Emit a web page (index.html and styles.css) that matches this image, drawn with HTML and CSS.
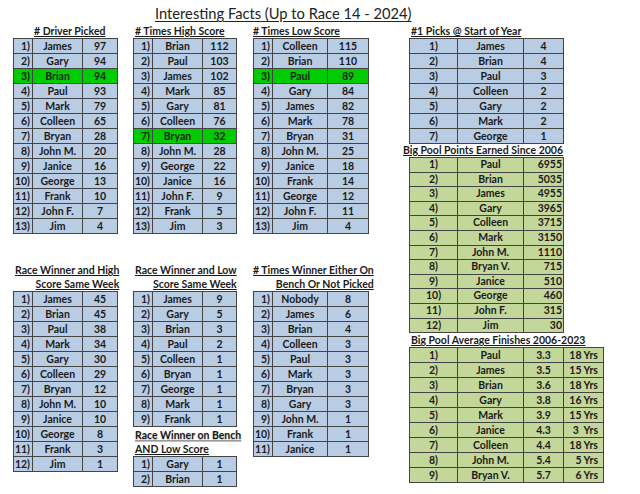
FILE: index.html
```html
<!DOCTYPE html>
<html>
<head>
<meta charset="utf-8">
<link rel="stylesheet" href="styles.css">
</head>
<body>
<div class="page">
  <div class="title"><span>Interesting Facts (Up to Race 14 - 2024)</span></div>
  <div class="grid">
    <div class="col col1">
      <div class="hd hd-c1"><span>#&nbsp;Driver Picked</span></div>
      <table class="t w1 blue">
        <colgroup><col class="ra"><col class="rb"><col class="rc"></colgroup>
        <tr><td class="rk">1)</td><td>James</td><td>97</td></tr>
        <tr><td class="rk">2)</td><td>Gary</td><td>94</td></tr>
        <tr class="hi"><td class="rk">3)</td><td>Brian</td><td>94</td></tr>
        <tr><td class="rk">4)</td><td>Paul</td><td>93</td></tr>
        <tr><td class="rk">5)</td><td>Mark</td><td>79</td></tr>
        <tr><td class="rk">6)</td><td>Colleen</td><td>65</td></tr>
        <tr><td class="rk">7)</td><td>Bryan</td><td>28</td></tr>
        <tr><td class="rk">8)</td><td>John M.</td><td>20</td></tr>
        <tr><td class="rk">9)</td><td>Janice</td><td>16</td></tr>
        <tr><td class="rk">10)</td><td>George</td><td>13</td></tr>
        <tr><td class="rk">11)</td><td>Frank</td><td>10</td></tr>
        <tr><td class="rk">12)</td><td>John F.</td><td>7</td></tr>
        <tr><td class="rk">13)</td><td>Jim</td><td>4</td></tr>
      </table>
      <div class="hd2 hd2-c1"><span>Race Winner and High</span><br><span>Score Same Week</span></div>
      <table class="t w1 blue">
        <colgroup><col class="ra"><col class="rb"><col class="rc"></colgroup>
        <tr><td class="rk">1)</td><td>James</td><td>45</td></tr>
        <tr><td class="rk">2)</td><td>Brian</td><td>45</td></tr>
        <tr><td class="rk">3)</td><td>Paul</td><td>38</td></tr>
        <tr><td class="rk">4)</td><td>Mark</td><td>34</td></tr>
        <tr><td class="rk">5)</td><td>Gary</td><td>30</td></tr>
        <tr><td class="rk">6)</td><td>Colleen</td><td>29</td></tr>
        <tr><td class="rk">7)</td><td>Bryan</td><td>12</td></tr>
        <tr><td class="rk">8)</td><td>John M.</td><td>10</td></tr>
        <tr><td class="rk">9)</td><td>Janice</td><td>10</td></tr>
        <tr><td class="rk">10)</td><td>George</td><td>8</td></tr>
        <tr><td class="rk">11)</td><td>Frank</td><td>3</td></tr>
        <tr><td class="rk">12)</td><td>Jim</td><td>1</td></tr>
      </table>
    </div>

    <div class="col col2">
      <div class="hd hd-c2"><span>#&nbsp;Times High Score</span></div>
      <table class="t w2 blue">
        <colgroup><col class="ra"><col class="rb"><col class="rc"></colgroup>
        <tr><td class="rk">1)</td><td>Brian</td><td>112</td></tr>
        <tr><td class="rk">2)</td><td>Paul</td><td>103</td></tr>
        <tr><td class="rk">3)</td><td>James</td><td>102</td></tr>
        <tr><td class="rk">4)</td><td>Mark</td><td>85</td></tr>
        <tr><td class="rk">5)</td><td>Gary</td><td>81</td></tr>
        <tr><td class="rk">6)</td><td>Colleen</td><td>76</td></tr>
        <tr class="hi"><td class="rk">7)</td><td>Bryan</td><td>32</td></tr>
        <tr><td class="rk">8)</td><td>John M.</td><td>28</td></tr>
        <tr><td class="rk">9)</td><td>George</td><td>22</td></tr>
        <tr><td class="rk">10)</td><td>Janice</td><td>16</td></tr>
        <tr><td class="rk">11)</td><td>John F.</td><td>9</td></tr>
        <tr><td class="rk">12)</td><td>Frank</td><td>5</td></tr>
        <tr><td class="rk">13)</td><td>Jim</td><td>3</td></tr>
      </table>
      <div class="hd2 hd2-c2"><span>Race Winner and Low</span><br><span>Score Same Week</span></div>
      <table class="t w2 blue">
        <colgroup><col class="ra"><col class="rb"><col class="rc"></colgroup>
        <tr><td class="rk">1)</td><td>James</td><td>9</td></tr>
        <tr><td class="rk">2)</td><td>Gary</td><td>5</td></tr>
        <tr><td class="rk">3)</td><td>Brian</td><td>3</td></tr>
        <tr><td class="rk">4)</td><td>Paul</td><td>2</td></tr>
        <tr><td class="rk">5)</td><td>Colleen</td><td>1</td></tr>
        <tr><td class="rk">6)</td><td>Bryan</td><td>1</td></tr>
        <tr><td class="rk">7)</td><td>George</td><td>1</td></tr>
        <tr><td class="rk">8)</td><td>Mark</td><td>1</td></tr>
        <tr><td class="rk">9)</td><td>Frank</td><td>1</td></tr>
      </table>
      <div class="hd3"><span class="shadow">Race Winner on Bench</span><br><span>AND Low Score</span></div>
      <table class="t w2 blue">
        <colgroup><col class="ra"><col class="rb"><col class="rc"></colgroup>
        <tr><td class="rk">1)</td><td>Gary</td><td>1</td></tr>
        <tr><td class="rk">2)</td><td>Brian</td><td>1</td></tr>
      </table>
    </div>

    <div class="col col3">
      <div class="hd hd-c3"><span>#&nbsp;Times Low Score</span></div>
      <table class="t w3 blue">
        <colgroup><col class="ra"><col class="rb3"><col class="rc3"></colgroup>
        <tr><td class="rk">1)</td><td>Colleen</td><td>115</td></tr>
        <tr><td class="rk">2)</td><td>Brian</td><td>110</td></tr>
        <tr class="hi"><td class="rk">3)</td><td>Paul</td><td>89</td></tr>
        <tr><td class="rk">4)</td><td>Gary</td><td>84</td></tr>
        <tr><td class="rk">5)</td><td>James</td><td>82</td></tr>
        <tr><td class="rk">6)</td><td>Mark</td><td>78</td></tr>
        <tr><td class="rk">7)</td><td>Bryan</td><td>31</td></tr>
        <tr><td class="rk">8)</td><td>John M.</td><td>25</td></tr>
        <tr><td class="rk">9)</td><td>Janice</td><td>18</td></tr>
        <tr><td class="rk">10)</td><td>Frank</td><td>14</td></tr>
        <tr><td class="rk">11)</td><td>George</td><td>12</td></tr>
        <tr><td class="rk">12)</td><td>John F.</td><td>11</td></tr>
        <tr><td class="rk">13)</td><td>Jim</td><td>4</td></tr>
      </table>
      <div class="hd2 hd2-c3"><span>#&nbsp;Times Winner Either On</span><br><span>Bench Or Not Picked</span></div>
      <table class="t w3 blue">
        <colgroup><col class="ra"><col class="rb3"><col class="rc3"></colgroup>
        <tr><td class="rk">1)</td><td>Nobody</td><td>8</td></tr>
        <tr><td class="rk">2)</td><td>James</td><td>6</td></tr>
        <tr><td class="rk">3)</td><td>Brian</td><td>4</td></tr>
        <tr><td class="rk">4)</td><td>Colleen</td><td>3</td></tr>
        <tr><td class="rk">5)</td><td>Paul</td><td>3</td></tr>
        <tr><td class="rk">6)</td><td>Mark</td><td>3</td></tr>
        <tr><td class="rk">7)</td><td>Bryan</td><td>3</td></tr>
        <tr><td class="rk">8)</td><td>Gary</td><td>3</td></tr>
        <tr><td class="rk">9)</td><td>John M.</td><td>1</td></tr>
        <tr><td class="rk">10)</td><td>Frank</td><td>1</td></tr>
        <tr><td class="rk">11)</td><td>Janice</td><td>1</td></tr>
      </table>
    </div>

    <div class="col col4">
      <div class="hd hd-c4"><span>#1 Picks @ Start of Year</span></div>
      <table class="t w4 blue">
        <colgroup><col class="ga"><col class="gb"><col class="gc"></colgroup>
        <tr><td>1)</td><td>James</td><td>4</td></tr>
        <tr><td>2)</td><td>Brian</td><td>4</td></tr>
        <tr><td>3)</td><td>Paul</td><td>3</td></tr>
        <tr><td>4)</td><td>Colleen</td><td>2</td></tr>
        <tr><td>5)</td><td>Gary</td><td>2</td></tr>
        <tr><td>6)</td><td>Mark</td><td>2</td></tr>
        <tr><td>7)</td><td>George</td><td>1</td></tr>
      </table>
      <div class="hd hd-pts"><span>Big Pool Points Earned Since 2006</span></div>
      <table class="t w4 olive tight">
        <colgroup><col class="ga"><col class="gb"><col class="gc"></colgroup>
        <tr><td>1)</td><td>Paul</td><td class="num">6955</td></tr>
        <tr><td>2)</td><td>Brian</td><td class="num">5035</td></tr>
        <tr><td>3)</td><td>James</td><td class="num">4955</td></tr>
        <tr><td>4)</td><td>Gary</td><td class="num">3965</td></tr>
        <tr><td>5)</td><td>Colleen</td><td class="num">3715</td></tr>
        <tr><td>6)</td><td>Mark</td><td class="num">3150</td></tr>
        <tr><td>7)</td><td>John M.</td><td class="num">1110</td></tr>
        <tr><td>8)</td><td>Bryan V.</td><td class="num">715</td></tr>
        <tr><td>9)</td><td>Janice</td><td class="num">510</td></tr>
        <tr><td>10)</td><td>George</td><td class="num">460</td></tr>
        <tr><td>11)</td><td>John F.</td><td class="num">315</td></tr>
        <tr><td>12)</td><td>Jim</td><td class="num">30</td></tr>
      </table>
      <div class="hd hd-avg"><span>Big Pool Average Finishes 2006-2023</span></div>
      <table class="t w5 olive">
        <colgroup><col class="ga"><col class="gb"><col class="gc"><col class="gd"></colgroup>
        <tr><td>1)</td><td>Paul</td><td>3.3</td><td class="yrs">18 Yrs</td></tr>
        <tr><td>2)</td><td>James</td><td>3.5</td><td class="yrs">15 Yrs</td></tr>
        <tr><td>3)</td><td>Brian</td><td>3.6</td><td class="yrs">18 Yrs</td></tr>
        <tr><td>4)</td><td>Gary</td><td>3.8</td><td class="yrs">16 Yrs</td></tr>
        <tr><td>5)</td><td>Mark</td><td>3.9</td><td class="yrs">15 Yrs</td></tr>
        <tr><td>6)</td><td>Janice</td><td>4.3</td><td class="yrs">3&nbsp; Yrs</td></tr>
        <tr><td>7)</td><td>Colleen</td><td>4.4</td><td class="yrs">18 Yrs</td></tr>
        <tr><td>8)</td><td>John M.</td><td>5.4</td><td class="yrs">5 Yrs</td></tr>
        <tr><td>9)</td><td>Bryan V.</td><td>5.7</td><td class="yrs">6 Yrs</td></tr>
      </table>
    </div>
  </div>
</div>
</body>
</html>
```

FILE: styles.css
```css
html, body {
  margin: 0;
  padding: 0;
  background: #ffffff;
}

body {
  font-family: Lato, "Open Sans", "Liberation Sans", sans-serif;
  color: #1b1b1b;
}

.page {
  width: 640px;
  height: 494px;
  overflow: hidden;
}

.title {
  height: 24px;
  padding-left: 155px;
  font-size: 14.7px;
  line-height: 27px;
  font-weight: 400;
  color: #222;
}
.title span {
  text-decoration: underline;
  text-underline-offset: 2px;
  text-decoration-thickness: 1px;
}

.grid {
  display: grid;
  grid-template-columns: 120px 120px 150px 237px;
  padding-left: 13px;
}

.col {
  display: flex;
  flex-direction: column;
  align-items: flex-start;
}

.hd, .hd2, .hd3 {
  font-size: 10.5px;
  font-weight: 700;
  line-height: 14px;
  white-space: nowrap;
  color: #1b1b1b;
}
.hd span, .hd2 span, .hd3 span {
  text-decoration: underline;
  text-underline-offset: 1px;
  text-decoration-thickness: 1px;
}

.hd { height: 14px; }
.hd-c1 { padding-left: 21px; }
.hd-c2 { padding-left: 2px; }
.hd-c3 { padding-left: 0; }
.hd-c4 { padding-left: 2px; }
.hd-pts { height: 13px; line-height: 13px; }
.hd-avg { padding-left: 2px; }

.hd2 {
  margin-top: 29px;
  text-align: right;
  height: 28px;
}
.hd2-c1 { margin-left: 2px; }
.hd2-c2 { margin-left: 2px; }
.hd2-c3 { margin-left: 0; }

.hd3 {
  margin-top: 1px;
  margin-left: 2px;
  height: 28px;
}
.hd3 .shadow {
  text-decoration-color: #9a9a9a;
  text-shadow: 0 1px 1px #bdbdbd;
}

.col4 { padding-left: 6px; }
.col4 .hd-pts { margin-left: -6px; }

.t {
  border-collapse: collapse;
  table-layout: fixed;
  font-size: 10.5px;
  font-weight: 700;
  color: #1b1b1b;
  border: 1px solid #2c2c2c;
}
.t td {
  height: 14px;
  padding: 0;
  line-height: 14px;
  text-align: center;
  border: 1px solid #444;
  white-space: nowrap;
  overflow: hidden;
}
.t td.rk {
  text-align: right;
  padding-right: 2px;
}
.t td.num {
  text-align: right;
  padding-right: 1px;
}
.t td.yrs {
  text-align: right;
  padding-right: 5px;
}

.tight td {
  height: 13.6px;
  line-height: 13.6px;
}

.blue td { background: #b8cce4; }
.olive td { background: #c4d79b; }
.blue tr.hi td { background: #00cc00; }

.w1 { width: 104px; }
.w2 { width: 103px; }
.w3 { width: 115px; }
.w4 { width: 154px; }
.w5 { width: 194px; }

col.ra { width: 19px; }
col.rb { width: 50px; }
col.rc { width: 35px; }
.w2 col.rc { width: 34px; }
col.rb3 { width: 55px; }
col.rc3 { width: 41px; }

col.ga { width: 48px; }
col.gb { width: 66px; }
col.gc { width: 40px; }
col.gd { width: 40px; }
```
